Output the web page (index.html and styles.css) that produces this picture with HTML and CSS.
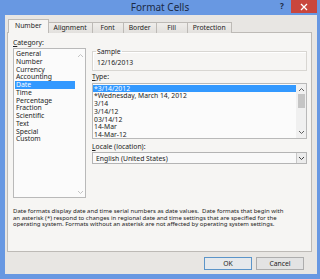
FILE: index.html
```html
<!DOCTYPE html>
<html>
<head>
<meta charset="utf-8">
<link rel="stylesheet" href="styles.css">
</head>
<body>
<div class="window">
  <div class="titlebar">
    <div class="title">Format Cells</div>
    <div class="help">?</div>
    <div class="close">
      <svg width="8" height="8" viewBox="0 0 8 8"><path d="M1 1L7 7M7 1L1 7" stroke="#fff" stroke-width="1.3"/></svg>
    </div>
  </div>
  <div class="dialog">
    <div class="tabs">
      <div class="tab active">Number</div>
      <div class="tab">Alignment</div>
      <div class="tab">Font</div>
      <div class="tab">Border</div>
      <div class="tab">Fill</div>
      <div class="tab">Protection</div>
    </div>
    <div class="panel">
      <div class="cols">
        <div class="left">
          <div class="label"><u>C</u>ategory:</div>
          <div class="listbox cat">
            <div class="items">
              <div class="item">General</div>
              <div class="item">Number</div>
              <div class="item">Currency</div>
              <div class="item">Accounting</div>
              <div class="item sel">Date</div>
              <div class="item">Time</div>
              <div class="item">Percentage</div>
              <div class="item">Fraction</div>
              <div class="item">Scientific</div>
              <div class="item">Text</div>
              <div class="item">Special</div>
              <div class="item">Custom</div>
            </div>
            <div class="vscroll plain">
              <svg class="arrow" width="7" height="5" viewBox="0 0 7 5"><path d="M1 4L3.5 1.5L6 4" fill="none" stroke="#c4c4c4" stroke-width="1"/></svg>
              <svg class="arrow" width="7" height="5" viewBox="0 0 7 5"><path d="M1 1L3.5 3.5L6 1" fill="none" stroke="#c4c4c4" stroke-width="1"/></svg>
            </div>
          </div>
        </div>
        <div class="right">
          <fieldset class="sample">
            <legend>Sample</legend>
            <div class="sample-value">12/16/2013</div>
          </fieldset>
          <div class="label"><u>T</u>ype:</div>
          <div class="listbox type">
            <div class="items">
              <div class="item sel">*3/14/2012</div>
              <div class="item">*Wednesday, March 14, 2012</div>
              <div class="item">3/14</div>
              <div class="item">3/14/12</div>
              <div class="item">03/14/12</div>
              <div class="item">14-Mar</div>
              <div class="item">14-Mar-12</div>
            </div>
            <div class="vscroll">
              <svg class="arrow" width="7" height="5" viewBox="0 0 7 5"><path d="M1 4L3.5 1.5L6 4" fill="none" stroke="#606060" stroke-width="1"/></svg>
              <div class="thumb"></div>
              <div class="spacer"></div>
              <svg class="arrow" width="7" height="5" viewBox="0 0 7 5"><path d="M1 1L3.5 3.5L6 1" fill="none" stroke="#606060" stroke-width="1"/></svg>
            </div>
          </div>
          <div class="label locale"><u>L</u>ocale (location):</div>
          <div class="combo">
            <span class="combo-text">English (United States)</span>
            <span class="drop"><svg width="7" height="5" viewBox="0 0 7 5"><path d="M1 1L3.5 3.5L6 1" fill="none" stroke="#404040" stroke-width="1"/></svg></span>
          </div>
        </div>
      </div>
      <div class="desc">
        <div>Date formats display date and time serial numbers as date values.&nbsp; Date formats that begin with</div>
        <div>an asterisk (*) respond to changes in regional date and time settings that are specified for the</div>
        <div>operating system. Formats without an asterisk are not affected by operating system settings.</div>
      </div>
    </div>
    <div class="buttons">
      <div class="btn default">OK</div>
      <div class="btn">Cancel</div>
    </div>
  </div>
</div>
</body>
</html>
```

FILE: styles.css
```css
* { box-sizing: border-box; }
html, body { margin: 0; padding: 0; }
body {
  width: 320px;
  height: 279px;
  overflow: hidden;
  font-family: "Noto Sans", "Open Sans", sans-serif;
  color: #1b1b1b;
}
.window {
  width: 320px;
  height: 279px;
  background: #6898e2;
  display: flex;
  flex-direction: column;
}
.titlebar {
  height: 15px;
  display: grid;
  grid-template-columns: 1fr 13px 26px 3px;
  grid-template-rows: 15px;
}
.title {
  grid-column: 1 / -1;
  grid-row: 1;
  text-align: center;
  font-size: 10px;
  line-height: 15px;
  color: #1c2a44;
}
.help {
  grid-column: 2;
  grid-row: 1;
  font-size: 8px;
  line-height: 12px;
  font-weight: bold;
  color: #1c2a44;
  text-align: left;
  padding-left: 2px;
}
.close {
  grid-column: 3;
  grid-row: 1;
  height: 13px;
  background: #c9463d;
  display: flex;
  align-items: center;
  justify-content: center;
}
.dialog {
  flex: 1;
  margin: 0 3px 5px 5px;
  background: #e8e6e3;
  display: flex;
  flex-direction: column;
}
.tabs {
  display: flex;
  align-items: flex-end;
  height: 18px;
  padding-left: 3px;
  position: relative;
  z-index: 1;
  margin-bottom: -1px;
}
.tab {
  min-width: 32px;
  height: 11px;
  padding: 0 5px;
  border: 1px solid #bdbab6;
  border-bottom: none;
  margin-right: -1px;
  background: linear-gradient(#efedea, #e2e0dd);
  font-size: 6.8px;
  line-height: 10px;
  text-align: center;
  color: #222;
}
.tab.active {
  height: 14px;
  background: #f6f5f3;
  margin-left: 0;
  padding: 0 6px;
  line-height: 11px;
}
.panel {
  margin: 0 5px 0 2px;
  height: 220px;
  border: 1px solid #bdbab6;
  background: #f6f5f3;
  padding: 5px 4px 0 5px;
  display: flex;
  flex-direction: column;
}
.cols {
  display: flex;
  gap: 6px;
}
.left { width: 73px; }
.right { flex: 1; display: flex; flex-direction: column; }
.label {
  font-size: 6.8px;
  line-height: 9px;
  color: #222;
}
.label u { text-decoration: underline; text-underline-offset: 1px; }
.listbox {
  border: 1px solid #b9b9b9;
  background: #fbfbfb;
  display: flex;
  font-size: 6.8px;
  color: #222;
}
.cat {
  height: 150px;
  margin-top: 1px;
  padding-top: 1px;
}
.items { flex: 1; }
.item {
  line-height: 7.75px;
  padding-left: 1px;
  white-space: nowrap;
}
.cat .item { margin-left: 1px; }
.item.sel {
  background: #3399ff;
  color: #fff;
}
.vscroll {
  width: 10px;
  display: flex;
  flex-direction: column;
  align-items: center;
  justify-content: space-between;
  padding: 3px 0 3px;
}
.vscroll.plain { padding: 3px 0 2px; }
.type .vscroll {
  background: #f0f0f0;
  justify-content: flex-start;
  padding: 3px 0 3px;
}
.thumb {
  width: 7px;
  height: 14px;
  background: #c5c5c5;
  margin-top: 2px;
}
.spacer { flex: 1; }
.sample {
  margin: 9px 0 0 0;
  padding: 0 4px 3px 4px;
  border: 1px solid #d8d6d2;
  box-shadow: inset 1px 1px 0 #fff;
}
.sample legend {
  font-size: 6.8px;
  line-height: 9px;
  padding: 0 1px;
  margin-left: -1px;
}
.sample-value {
  font-size: 6.8px;
  line-height: 8px;
  padding-top: 3px;
}
.right > .label { margin-top: 1px; }
.type {
  height: 56px;
  margin-top: 2px;
}
.type .items { padding-top: 0.5px; }
.label.locale { margin-top: 3px; }
.combo {
  margin-top: 1px;
  height: 12px;
  border: 1px solid #b4b4b4;
  background: #f9f9f9;
  display: flex;
  align-items: center;
  font-size: 6.8px;
  color: #222;
}
.combo-text { flex: 1; padding-left: 3px; }
.drop {
  width: 10px;
  height: 10px;
  border-left: 1px solid #c8c8c8;
  background: #ececec;
  display: flex;
  align-items: center;
  justify-content: center;
}
.desc {
  margin-top: 10px;
  font-size: 6px;
  line-height: 6.5px;
  white-space: nowrap;
  color: #222;
}
.buttons {
  display: flex;
  justify-content: flex-end;
  gap: 4px;
  padding: 5px 13px 0 0;
}
.btn {
  width: 48px;
  height: 13px;
  border: 1px solid #adadad;
  background: #e3e3e3;
  font-size: 6.8px;
  line-height: 11px;
  text-align: center;
  color: #222;
}
.btn.default {
  border-color: #5c95c9;
  background: #e6e9ec;
}
```
